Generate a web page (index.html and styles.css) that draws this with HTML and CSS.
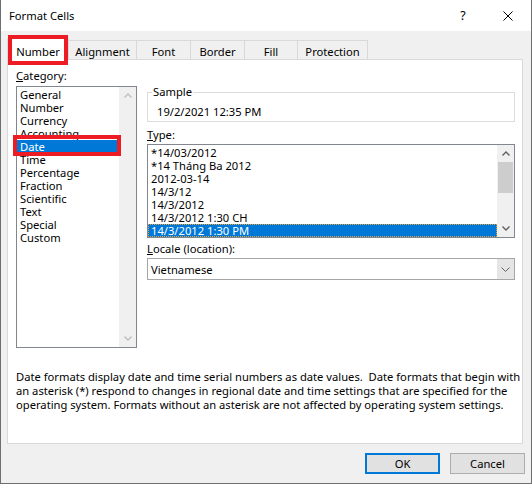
FILE: index.html
```html
<!DOCTYPE html>
<html lang="en">
<head>
  <meta charset="UTF-8">
  <title>Format Cells</title>
  <link rel="stylesheet" href="styles.css">
</head>
<body>

<div class="dialog">
  <div class="titlebar">
    <span class="title">Format Cells</span>
    <span class="help">?</span>
    <span class="close">
      <svg width="10" height="10" viewBox="0 0 10 10"><path d="M0.5 0.5L9.5 9.5M9.5 0.5L0.5 9.5" stroke="#000" stroke-width="1" fill="none"/></svg>
    </span>
  </div>

  <div class="tabs">
    <div class="tab active t-number">Number</div>
    <div class="tab t-align">Alignment</div>
    <div class="tab t-font">Font</div>
    <div class="tab t-border">Border</div>
    <div class="tab t-fill">Fill</div>
    <div class="tab t-protect">Protection</div>
  </div>

  <div class="panel">
    <div class="columns">
      <div class="category">
        <div class="label"><u>C</u>ategory:</div>
        <div class="listbox cat-list">
          <ul class="items">
            <li>General</li>
            <li>Number</li>
            <li>Currency</li>
            <li>Accounting</li>
            <li class="selected marked">Date</li>
            <li>Time</li>
            <li>Percentage</li>
            <li>Fraction</li>
            <li>Scientific</li>
            <li>Text</li>
            <li>Special</li>
            <li>Custom</li>
          </ul>
          <div class="scrollbar disabled">
            <div class="arrow"><svg width="8" height="5" viewBox="0 0 8 5"><path d="M0.5 4.5L4 1L7.5 4.5" stroke="currentColor" stroke-width="1.4" fill="none"/></svg></div>
            <div class="arrow"><svg width="8" height="5" viewBox="0 0 8 5"><path d="M0.5 0.5L4 4L7.5 0.5" stroke="currentColor" stroke-width="1.4" fill="none"/></svg></div>
          </div>
        </div>
      </div>

      <div class="details">
        <fieldset class="sample">
          <legend>Sample</legend>
          <div class="sample-value">19/2/2021 12:35 PM</div>
        </fieldset>

        <div class="label type-label"><u>T</u>ype:</div>
        <div class="listbox type-list">
          <ul class="items">
            <li>*14/03/2012</li>
            <li>*14 Tháng Ba 2012</li>
            <li>2012-03-14</li>
            <li>14/3/12</li>
            <li>14/3/2012</li>
            <li>14/3/2012 1:30 CH</li>
            <li class="selected focused">14/3/2012 1:30 PM</li>
          </ul>
          <div class="scrollbar">
            <div class="arrow"><svg width="8" height="5" viewBox="0 0 8 5"><path d="M0.5 4.5L4 1L7.5 4.5" stroke="currentColor" stroke-width="1.4" fill="none"/></svg></div>
            <div class="thumb"></div>
            <div class="track"></div>
            <div class="arrow"><svg width="8" height="5" viewBox="0 0 8 5"><path d="M0.5 0.5L4 4L7.5 0.5" stroke="currentColor" stroke-width="1.4" fill="none"/></svg></div>
          </div>
        </div>

        <div class="label locale-label"><u>L</u>ocale (location):</div>
        <div class="dropdown">
          <span class="dropdown-value">Vietnamese</span>
          <span class="dropdown-btn"><svg width="9" height="5" viewBox="0 0 9 5"><path d="M0.5 0.5L4.5 4.5L8.5 0.5" stroke="#606060" stroke-width="1" fill="none"/></svg></span>
        </div>
      </div>
    </div>

    <p class="description">Date formats display date and time serial numbers as date values.&nbsp; Date formats that begin with<br>an asterisk (*) respond to changes in regional date and time settings that are specified for the<br>operating system. Formats without an asterisk are not affected by operating system settings.</p>
  </div>

  <div class="actions">
    <button class="btn default">OK</button>
    <button class="btn">Cancel</button>
  </div>
</div>

</body>
</html>
```

FILE: styles.css
```css
*, *::before, *::after {
  box-sizing: border-box;
}

body {
  margin: 0;
  font-family: "Noto Sans", "Open Sans", sans-serif;
  font-size: 11.2px;
  color: #000;
  background: #f0f0f0;
}

.dialog {
  width: 532px;
  height: 484px;
  background: #f0f0f0;
  border: 1px solid #6f6f6f;
  border-top: none;
  display: flex;
  flex-direction: column;
}

/* title bar */
.titlebar {
  height: 31px;
  flex-shrink: 0;
  background: #fff;
  display: flex;
  align-items: center;
  padding-left: 8px;
}

.title {
  flex: 1;
}

.help {
  width: 14px;
  text-align: center;
  font-size: 12.5px;
  margin-right: 33px;
}

.close {
  display: flex;
  margin-right: 18px;
}

/* tabs */
.tabs {
  display: flex;
  height: 19px;
  margin: 9px 0 0 6px;
  flex-shrink: 0;
  position: relative;
  z-index: 1;
}

.tab {
  height: 19px;
  border: 1px solid #d9d9d9;
  border-bottom: none;
  margin-left: -1px;
  background: #f0f0f0;
  display: flex;
  justify-content: center;
  align-items: center;
  padding-top: 2px;
}

.t-number { width: 62px; margin-left: 0; }
.t-align { width: 69px; }
.t-font { width: 55px; }
.t-border { width: 55px; }
.t-fill { width: 54px; }
.t-protect { width: 71px; }

.tab.active {
  position: relative;
  height: 22px;
  margin-top: -2px;
  padding-top: 3px;
  background: #fff;
  z-index: 2;
}

.tab.active::after {
  content: "";
  position: absolute;
  left: 0;
  right: 0;
  top: -4px;
  height: 30px;
  border: 4px solid #ed1c24;
}

/* panel */
.panel {
  height: 385px;
  flex-shrink: 0;
  margin: 0 8px 0 6px;
  background: #fff;
  border: 1px solid #d9d9d9;
  padding: 8px 7px 0 8px;
}

.columns {
  display: flex;
  gap: 10px;
}

.category {
  width: 121px;
}

.details {
  width: 368px;
}

.label {
  line-height: 16px;
  height: 16px;
}

.category .label {
  margin-bottom: 2px;
}

.listbox {
  display: flex;
  border: 1px solid #82878f;
  background: #fff;
}

.cat-list {
  height: 262px;
}

.items {
  list-style: none;
  margin: 0;
  padding: 1px 0 0 0;
  flex: 1;
}

.items li {
  height: 13px;
  line-height: 13px;
  padding-left: 3px;
  white-space: nowrap;
}

.items li.selected {
  background: #0078d7;
  color: #fff;
}

.items li.marked {
  position: relative;
}

.items li.marked::after {
  content: "";
  position: absolute;
  left: -4px;
  top: -5px;
  width: 108px;
  height: 21px;
  border: 4px solid #ed1c24;
}

.items li.focused {
  outline: 1px dotted #e8a33a;
  outline-offset: -1px;
}

.scrollbar {
  width: 17px;
  background: #f0f0f0;
  display: flex;
  flex-direction: column;
  justify-content: space-between;
  color: #606060;
}

.scrollbar.disabled {
  color: #bfbfbf;
}

.arrow {
  height: 17px;
  display: flex;
  align-items: center;
  justify-content: center;
  flex-shrink: 0;
}

.thumb {
  height: 31px;
  margin: 0 1px;
  background: #cdcdcd;
  flex-shrink: 0;
}

.track {
  flex: 1;
}

/* right column */
.sample {
  margin: 16px 0 0;
  padding: 0 4px 1px;
  border: 1px solid #dcdcdc;
  min-width: 0;
}

.sample legend {
  padding: 0 1px;
  line-height: 16px;
}

.sample-value {
  line-height: 16px;
  margin-top: 4px;
  padding-left: 5px;
}

.type-label {
  margin-top: 5px;
  margin-bottom: 1px;
}

.type-list {
  height: 94px;
}

.locale-label {
  margin-top: 3px;
}

.dropdown {
  margin-top: 1px;
  height: 22px;
  border: 1px solid #a6a6a6;
  display: flex;
  align-items: center;
  padding: 0 0 0 3px;
}

.dropdown-value {
  flex: 1;
}

.dropdown-btn {
  width: 17px;
  height: 20px;
  background: #e5e5e5;
  display: flex;
  align-items: center;
  justify-content: center;
}

.description {
  margin: 22px 0 0;
  line-height: 14px;
  white-space: nowrap;
}

/* buttons */
.actions {
  display: flex;
  justify-content: flex-end;
  gap: 10px;
  margin: 9px 6px 0 0;
}

.btn {
  width: 75px;
  height: 21px;
  font-family: inherit;
  font-size: 11.2px;
  color: #000;
  background: #e1e1e1;
  border: 1px solid #adadad;
  padding: 0;
}

.btn.default {
  border: 2px solid #0078d7;
}
```
